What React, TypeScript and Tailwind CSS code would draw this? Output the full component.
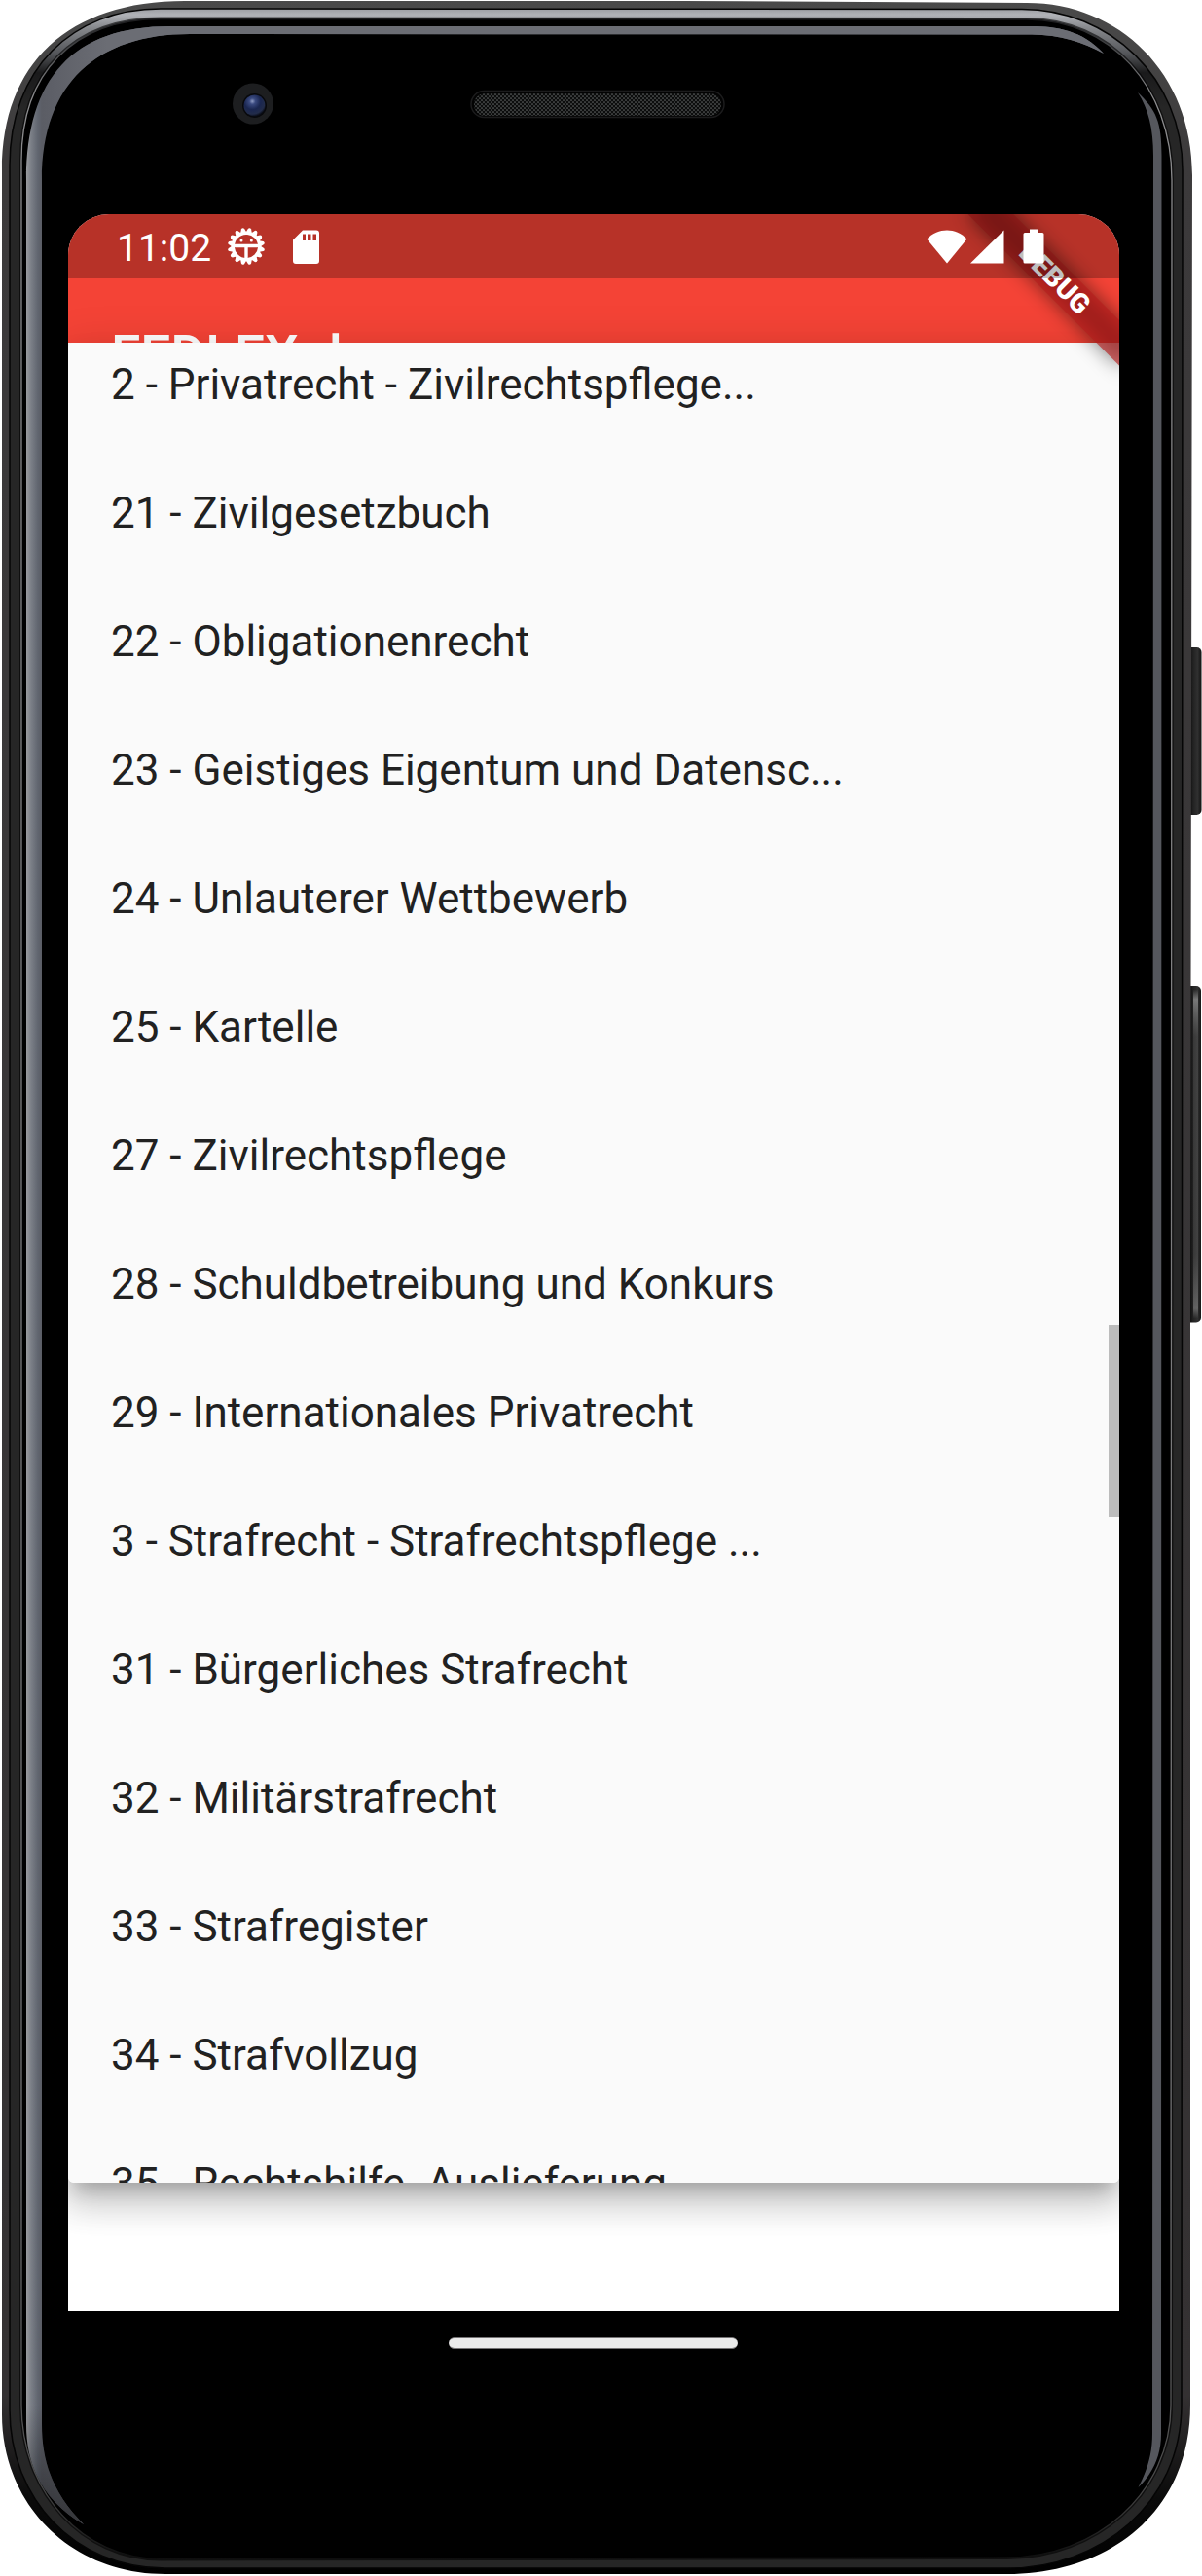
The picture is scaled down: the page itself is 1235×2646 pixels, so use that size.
import React from "react";

const entries = [
  "2 - Privatrecht - Zivilrechtspflege...",
  "21 - Zivilgesetzbuch",
  "22 - Obligationenrecht",
  "23 - Geistiges Eigentum und Datensc...",
  "24 - Unlauterer Wettbewerb",
  "25 - Kartelle",
  "27 - Zivilrechtspflege",
  "28 - Schuldbetreibung und Konkurs",
  "29 - Internationales Privatrecht",
  "3 - Strafrecht - Strafrechtspflege ...",
  "31 - Bürgerliches Strafrecht",
  "32 - Militärstrafrecht",
  "33 - Strafregister",
  "34 - Strafvollzug",
  "35 - Rechtshilfe. Auslieferung",
];

const OUTER =
  "M2 175C2 65 70 1 190 1L700 1L1055 3C1150 3 1225 75 1225 180L1223 1300L1223 2470C1223 2580 1140 2644 1035 2644L170 2644C70 2644 2 2570 2 2480Z";
const BAND =
  "M10 170C10 70 75 9 165 9L1050 9.5C1140 9.5 1215 80 1215 175L1214 2470C1214 2572 1130 2638 1035 2638L170 2638C75 2638 10 2565 10 2475Z";
const GLASS =
  "M22 165C22 75 75 19.5 165 19.5L1055 20C1140 20 1204 88 1204 185L1203 2470C1203 2562 1125 2627 1035 2627L165 2628.5C85 2628.5 22 2560 22 2470Z";
const REFLECTION =
  "M1134 55C1112 31 1085 27 1060 27L175 27C75 27 27 80 27 185L27 2490C27 2540 50 2572 86 2593C55 2562 43 2530 43 2490L43 185C43 85 100 35 195 35L1060 35.500C1090 36 1112 43 1134 55Z";

/* Phone hardware: shell, glass edge reflections, camera, speaker */
function PhoneFrame() {
  return (
    <svg className="absolute inset-0" width="1235" height="2646" viewBox="0 0 1235 2646" fill="none">
      <defs>
        <linearGradient id="shell" x1="0" y1="0" x2="0" y2="2646" gradientUnits="userSpaceOnUse">
          <stop offset="0" stopColor="#4a4a4a" />
          <stop offset="0.06" stopColor="#3c3a3b" />
          <stop offset="0.93" stopColor="#343132" />
          <stop offset="0.97" stopColor="#0a0a0a" />
          <stop offset="1" stopColor="#000" />
        </linearGradient>
        <linearGradient id="band" x1="0" y1="9" x2="0" y2="110" gradientUnits="userSpaceOnUse">
          <stop offset="0" stopColor="#9c9ea3" />
          <stop offset="0.06" stopColor="#b0b2b7" />
          <stop offset="0.2" stopColor="#85878b" />
          <stop offset="0.45" stopColor="#55575b" />
          <stop offset="0.65" stopColor="#1a1a1b" />
          <stop offset="1" stopColor="#262626" />
        </linearGradient>
        <linearGradient id="rim" x1="0" y1="20" x2="0" y2="2630" gradientUnits="userSpaceOnUse">
          <stop offset="0" stopColor="#1c1c1e" />
          <stop offset="0.008" stopColor="#3a3b3d" />
          <stop offset="0.03" stopColor="#8b8b8d" />
          <stop offset="0.85" stopColor="#707072" />
          <stop offset="0.97" stopColor="#4a4a4a" />
          <stop offset="1" stopColor="#0c0c0c" />
        </linearGradient>
        <linearGradient id="slateL" x1="27" y1="0" x2="43" y2="0" gradientUnits="userSpaceOnUse">
          <stop offset="0" stopColor="#9a9b9f" />
          <stop offset="0.3" stopColor="#7c8088" />
          <stop offset="0.75" stopColor="#60656f" />
          <stop offset="1" stopColor="#5b5d65" />
        </linearGradient>
        <linearGradient id="fadeB" x1="0" y1="2470" x2="0" y2="2600" gradientUnits="userSpaceOnUse">
          <stop offset="0" stopColor="#000" stopOpacity="0" />
          <stop offset="1" stopColor="#000" stopOpacity="0.5" />
        </linearGradient>
        <linearGradient id="topSlate" x1="43" y1="0" x2="110" y2="0" gradientUnits="userSpaceOnUse">
          <stop offset="0" stopColor="#6b6d74" stopOpacity="0" />
          <stop offset="1" stopColor="#6b6d74" />
        </linearGradient>
        <linearGradient id="key" x1="1222" y1="0" x2="1235" y2="0" gradientUnits="userSpaceOnUse">
          <stop offset="0" stopColor="#0b0b0b" />
          <stop offset="0.3" stopColor="#222" />
          <stop offset="0.65" stopColor="#303030" />
          <stop offset="1" stopColor="#0f0f0f" />
        </linearGradient>
        <linearGradient id="keyShine" x1="0" y1="1013" x2="0" y2="1358" gradientUnits="userSpaceOnUse">
          <stop offset="0.01" stopColor="#999" stopOpacity="0" />
          <stop offset="0.04" stopColor="#999" stopOpacity="0.7" />
          <stop offset="0.15" stopColor="#777" stopOpacity="0.25" />
          <stop offset="0.8" stopColor="#777" stopOpacity="0.25" />
          <stop offset="0.96" stopColor="#888" stopOpacity="0.6" />
          <stop offset="0.99" stopColor="#888" stopOpacity="0" />
        </linearGradient>
        <radialGradient id="lens" cx="0.4" cy="0.3" r="0.7">
          <stop offset="0" stopColor="#8f9cc4" />
          <stop offset="0.2" stopColor="#3a4a80" />
          <stop offset="0.55" stopColor="#1a2650" />
          <stop offset="0.85" stopColor="#222c4a" />
          <stop offset="1" stopColor="#0a0d18" />
        </radialGradient>
        <pattern id="mesh" width="4" height="4" patternUnits="userSpaceOnUse">
          <rect width="4" height="4" fill="#0c0d0d" />
          <circle cx="1" cy="1" r="0.85" fill="#606262" />
          <circle cx="3" cy="3" r="0.85" fill="#606262" />
        </pattern>
      </defs>

      <rect x="1216" y="665" width="18.5" height="172" rx="5" fill="url(#key)" />
      <rect x="1216" y="1013" width="18" height="345.500" rx="5" fill="url(#key)" />
      <rect x="1226" y="1014" width="5" height="343" rx="2.500" fill="url(#keyShine)" />

      <path d={OUTER} fill="url(#shell)" />
      <path d={BAND} fill="url(#band)" stroke="#050505" strokeWidth="1.500" />
      <path d={GLASS} fill="#000" stroke="#000" strokeWidth="4" strokeOpacity="0.6" />
      <path d={GLASS} stroke="url(#rim)" strokeWidth="1.300" />

      <path d={REFLECTION} fill="url(#slateL)" />
      <path d={REFLECTION} fill="url(#topSlate)" />
      <path d="M27 2470L43 2470L43 2490C43 2530 55 2562 86 2593C50 2572 27 2540 27 2490Z" fill="url(#fadeB)" />
      <path
        d="M1169 95C1188 113 1193.500 125 1193.500 160L1193 2500C1193 2522 1185 2540 1169.500 2555C1179 2537 1184 2520 1184 2500L1185 160C1185 132 1180 112 1169 95Z"
        fill="#55575d"
      />

      <circle cx="260" cy="106.500" r="21" fill="#1d1e20" />
      <circle cx="261.500" cy="108.500" r="12.500" fill="#08090c" />
      <circle cx="261.500" cy="108.500" r="11" fill="url(#lens)" />

      <rect x="484" y="93.500" width="260" height="27" rx="13.500" fill="#030303" stroke="#1c1c1d" strokeWidth="1.500" />
      <rect x="487" y="96" width="254" height="23" rx="11.500" fill="url(#mesh)" />
    </svg>
  );
}

/* Toothed ring with a small robot face */
function DebugIcon() {
  const teeth = Array.from({ length: 16 }, (_, i) => i * 22.5 + 11.25);
  return (
    <svg width="40" height="40" viewBox="-20 -20 40 40" fill="none">
      {teeth.map((a) => (
        <path key={a} d="M-3.200 -14L-1.600 -18.200Q0 -20 1.600 -18.200L3.200 -14Z" fill="#fff" transform={`rotate(${a})`} />
      ))}
      <circle r="13.700" stroke="#fff" strokeWidth="3.200" />
      <path d="M-13 -0.500H13M0 -0.500V13" stroke="#fff" strokeWidth="3.400" />
      <circle cx="-5" cy="-6" r="1.500" fill="#fff" />
      <circle cx="5.300" cy="-6" r="1.500" fill="#fff" />
    </svg>
  );
}

function StatusBar() {
  return (
    <div className="absolute inset-x-0 top-0 flex h-[66px] items-center bg-black/25 pl-[50px] pr-[77px] text-white">
      <span className="w-[113px] pt-[4px] text-[39px] leading-[62px]">11:02</span>
      <DebugIcon />
      <svg className="ml-[28px]" width="27" height="35" viewBox="0 0 27 35">
        <path
          fillRule="evenodd"
          fill="#fff"
          d="M10 .5H24Q27 .5 27 3.500V32Q27 35 24 35H3Q0 35 0 32V10.500ZM10 4.500V11H13V4.500ZM15 4.500V11H18.500V4.500ZM20.500 4.500V11H24V4.500Z"
        />
      </svg>
      <svg className="ml-auto" width="121" height="36" viewBox="0 0 121 36" fill="#fff">
        <path d="M21 35.500L.3 10.500C12 -1.500 30 -1.500 41.500 10.500Z" />
        <path d="M45 35.500L79.500 1.500V35.500Z" />
        <path d="M106 .5H114.500V4H119Q120.500 4 120.500 5.500V34Q120.500 35.500 119 35.500H101Q99.500 35.500 99.500 34V5.500Q99.500 4 101 4H106Z" />
      </svg>
    </div>
  );
}

export default function App() {
  return (
    <div className="relative h-[2646px] w-[1235px] overflow-hidden bg-white font-['Roboto',sans-serif]">
      <PhoneFrame />
      <div className="relative ml-[70px] w-[1080px] pt-[220px]">
        <div className="relative flex h-[2154px] flex-col overflow-hidden rounded-t-[42px] bg-white">
          <header className="h-[132px] shrink-0 bg-[#f44336]">
            <h1 className="pl-[44px] pt-[113px] text-[55px] font-medium leading-[64px] text-white">FEDLEX d</h1>
          </header>

          <div className="relative h-[1890px] shrink-0 rounded-[6px] shadow-[0_13.75px_17px_-8.25px_rgba(0,0,0,0.2),0_22px_33px_2.75px_rgba(0,0,0,0.14),0_8.25px_45px_5.5px_rgba(0,0,0,0.12)]">
            <div className="h-full overflow-hidden rounded-[6px] bg-[#fafafa]">
              <ul className="-mt-[23px]">
                {entries.map((e) => (
                  <li key={e} className="flex h-[132px] items-center whitespace-nowrap pl-[44px] text-[44px] text-[#212121]">
                    {e}
                  </li>
                ))}
              </ul>
            </div>
            <div className="absolute right-0 top-[1009px] h-[197px] w-[11px] bg-[#bcbcbc]" />
          </div>

          <div className="absolute left-full top-0 h-0 w-0 origin-top-left rotate-45">
            <div className="absolute -left-[110px] top-[77px] h-[33px] w-[220px] bg-black/50 blur-[10px]" />
            <div className="absolute -left-[110px] top-[77px] flex h-[33px] w-[220px] items-center justify-center bg-[#b71c1c]/63 text-[28px] font-black leading-none text-white">
              DEBUG
            </div>
          </div>

          <StatusBar />
        </div>
        <div className="flex pl-[391px] pt-[27px]">
          <div className="h-[12px] w-[297px] rounded-full border-y border-[#757375] bg-[#ebebeb]" />
        </div>
      </div>
    </div>
  );
}
